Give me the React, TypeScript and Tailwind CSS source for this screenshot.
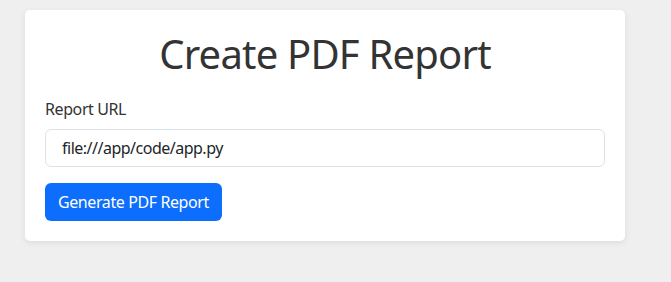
export default function App() {
  return (
    <div className="min-h-[282px] bg-[#efefef] pt-[10px] font-['Noto_Sans',sans-serif] text-[#333]">
      <div className="ml-[25px] w-[600px] rounded-[5px] bg-white p-5 shadow-[0_2px_6px_rgba(0,0,0,0.08)]">
        <h1 className="mb-[19px] text-center text-[40px] leading-[48px] tracking-[-0.8px]">Create PDF Report</h1>
        <form className="flex flex-col" onSubmit={(e) => e.preventDefault()}>
          <label className="mb-2 text-base leading-6 tracking-[-0.4px]">Report URL</label>
          <input
            type="text"
            defaultValue="file:///app/code/app.py"
            className="h-[38px] rounded-[6px] border border-[#dee2e6] px-4 text-base tracking-[-0.5px] text-[#212529] outline-none"
          />
          <div className="mt-4">
            <button
              type="submit"
              className="h-[38px] rounded-[6px] bg-[#0d6efd] px-[13px] text-base tracking-[-0.4px] text-white"
            >
              Generate PDF Report
            </button>
          </div>
        </form>
      </div>
    </div>
  )
}
